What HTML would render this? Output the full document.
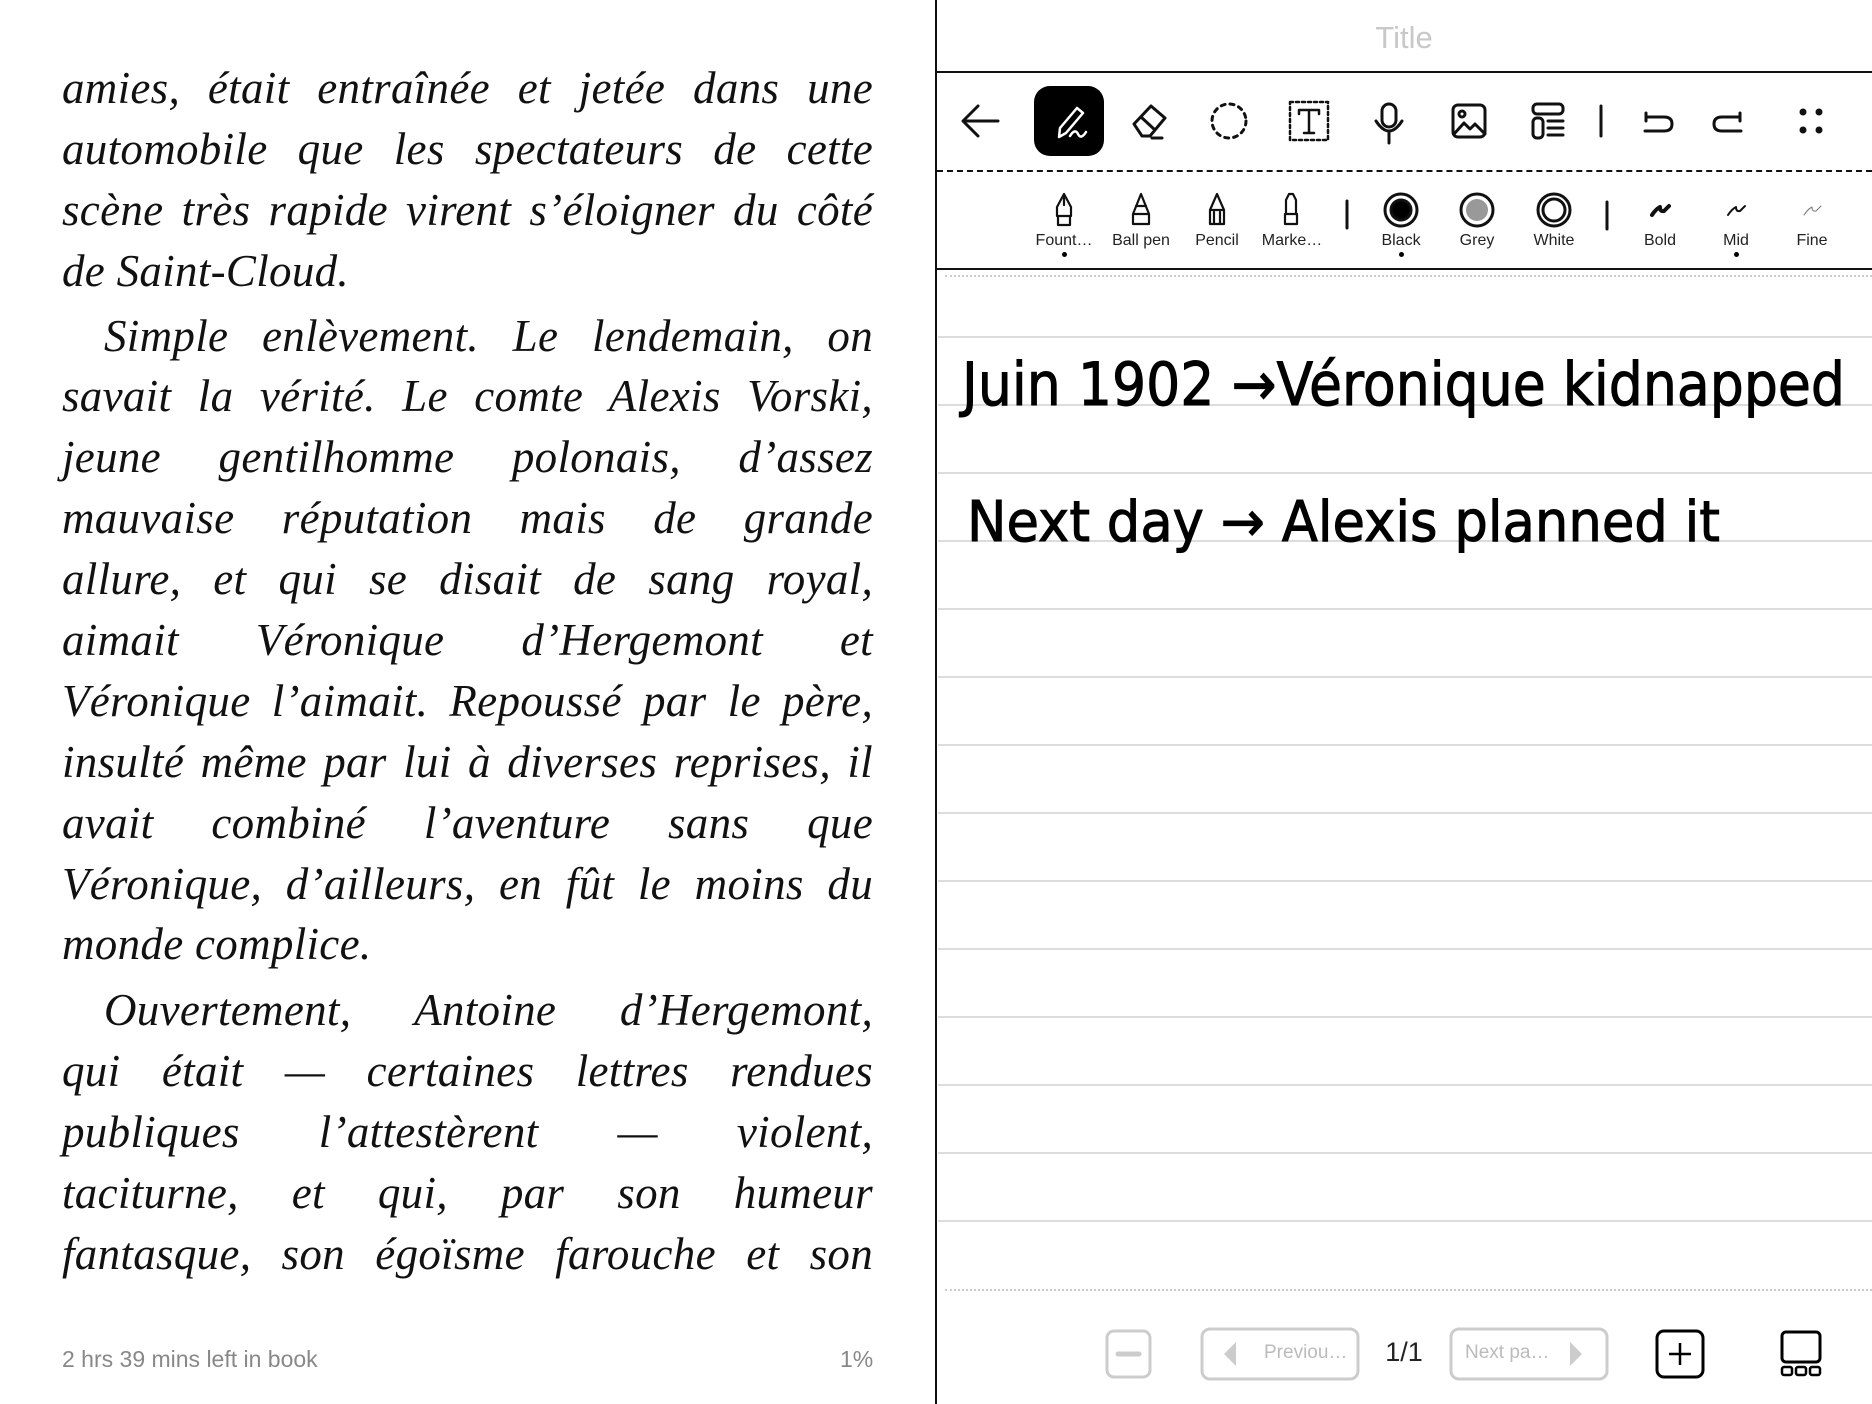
<!DOCTYPE html>
<html><head><meta charset="utf-8"><style>
*{margin:0;padding:0;box-sizing:border-box}
body{width:1872px;height:1404px;background:#fff;position:relative;overflow:hidden;font-family:"Liberation Sans",sans-serif}
.l{position:absolute;left:62px;width:811px;height:60px;line-height:60px;font-family:"Liberation Serif",serif;font-style:italic;font-size:45px;color:#111;white-space:nowrap;text-align:justify;text-align-last:justify;letter-spacing:0.3px}
.l.e{text-align-last:left}
.l.i{padding-left:42px}
.ab{position:absolute}
.rule{position:absolute;left:938px;width:934px;height:2px;background:#dcdcdc}
.lab{position:absolute;font-size:16px;color:#222;transform:translateX(-50%);white-space:nowrap;top:232px}
.dot{position:absolute;width:5px;height:5px;border-radius:50%;background:#000;top:252px}
</style></head><body>
<div class="l" style="top:58px">amies, était entraînée et jetée dans une</div>
<div class="l" style="top:119px">automobile que les spectateurs de cette</div>
<div class="l" style="top:180px">scène très rapide virent s’éloigner du côté</div>
<div class="l e" style="top:241px">de Saint-Cloud.</div>
<div class="l i" style="top:306px">Simple enlèvement. Le lendemain, on</div>
<div class="l" style="top:366px">savait la vérité. Le comte Alexis Vorski,</div>
<div class="l" style="top:427px">jeune gentilhomme polonais, d’assez</div>
<div class="l" style="top:488px">mauvaise réputation mais de grande</div>
<div class="l" style="top:549px">allure, et qui se disait de sang royal,</div>
<div class="l" style="top:610px">aimait Véronique d’Hergemont et</div>
<div class="l" style="top:671px">Véronique l’aimait. Repoussé par le père,</div>
<div class="l" style="top:732px">insulté même par lui à diverses reprises, il</div>
<div class="l" style="top:793px">avait combiné l’aventure sans que</div>
<div class="l" style="top:854px">Véronique, d’ailleurs, en fût le moins du</div>
<div class="l e" style="top:914px">monde complice.</div>
<div class="l i" style="top:980px">Ouvertement, Antoine d’Hergemont,</div>
<div class="l" style="top:1041px">qui était — certaines lettres rendues</div>
<div class="l" style="top:1102px">publiques l’attestèrent — violent,</div>
<div class="l" style="top:1163px">taciturne, et qui, par son humeur</div>
<div class="l" style="top:1224px">fantasque, son égoïsme farouche et son</div>
<div class="ab" style="left:62px;top:1346px;font-size:23px;color:#888">2 hrs 39 mins left in book</div>
<div class="ab" style="left:840px;top:1346px;font-size:23px;color:#888">1%</div>

<div class="ab" style="left:935px;top:0;width:2px;height:1404px;background:#111"></div>
<div class="ab" style="left:1404px;top:20px;transform:translateX(-50%);font-size:31px;color:#c8c8c8">Title</div>
<div class="ab" style="left:937px;top:71px;width:935px;height:2px;background:#111"></div>
<div class="ab" style="left:937px;top:170px;width:935px;height:0;border-top:2px dashed #111"></div>
<div class="ab" style="left:937px;top:268px;width:935px;height:2px;background:#111"></div>
<div class="ab" style="left:945px;top:275px;width:927px;height:0;border-top:2px dotted #ccc"></div>
<div class="ab" style="left:945px;top:1289px;width:927px;height:0;border-top:2px dotted #ccc"></div>
<div class="rule" style="top:336px"></div><div class="rule" style="top:404px"></div><div class="rule" style="top:472px"></div><div class="rule" style="top:540px"></div><div class="rule" style="top:608px"></div><div class="rule" style="top:676px"></div><div class="rule" style="top:744px"></div><div class="rule" style="top:812px"></div><div class="rule" style="top:880px"></div><div class="rule" style="top:948px"></div><div class="rule" style="top:1016px"></div><div class="rule" style="top:1084px"></div><div class="rule" style="top:1152px"></div><div class="rule" style="top:1220px"></div>

<svg class="ab" style="left:0;top:0" width="1872" height="280" fill="none" stroke="#111" stroke-width="3" stroke-linecap="round" stroke-linejoin="round">
<path d="M998 121H964M978 106L963 121L978 136"/>
<rect x="1034" y="86" width="70" height="70" rx="16" fill="#000" stroke="none"/>
<path d="M1059 137L1060 128L1077 108L1083 113L1066 133Z M1070 136q5-8 8 -2t8-2" stroke="#fff" stroke-width="2.5"/>
<path d="M1134 124L1151 106L1165 118L1150 136L1142 136Z M1141 117L1155 130 M1152 138H1162"/>
<circle cx="1229" cy="121" r="17" stroke-dasharray="4 5"/>
<rect x="1290" y="102" width="38" height="38" stroke-dasharray="3 3" stroke-width="2.5"/>
<path d="M1299 110H1319M1299 110v4M1319 110v4M1309 110V133M1304 133H1314" stroke-width="2.5"/>
<rect x="1382" y="104" width="14" height="23" rx="7"/><path d="M1376 121q13 20 26 0M1389 131V143"/>
<rect x="1453" y="105" width="32" height="32" rx="5"/><circle cx="1462" cy="114" r="3"/><path d="M1454 134l10-11 6 6 5-5 10 10"/>
<rect x="1533" y="104" width="30" height="10" rx="4"/><rect x="1533" y="118" width="10" height="20" rx="4"/><path d="M1548 121h15M1548 128h15M1548 135h15"/>
<path d="M1601 106V136"/>
<path d="M1646 117h18q8 0 8 7t-8 7h-19M1646 113v8"/>
<path d="M1740 117h-18q-8 0-8 7t8 7h19M1740 113v8"/>
<g fill="#111" stroke="none"><circle cx="1803" cy="112" r="3.5"/><circle cx="1819" cy="112" r="3.5"/><circle cx="1803" cy="130" r="3.5"/><circle cx="1819" cy="130" r="3.5"/></g>
<g stroke-width="2.2">
<path d="M1064 194l-7 13v9h14v-9z M1064 194v11 M1058 216h12v9h-12z"/>
<path d="M1141 194l-8 20v10h16v-10z M1136 206h10 M1133 214h16"/>
<path d="M1217 194l-7 16v14h14v-14z M1211 210h12 M1214 212v12M1220 212v12"/>
<path d="M1289 194h4l3 6v14h-10v-14z M1285 214h12v10h-12z"/>
</g>
<path d="M1347 201V228"/>
<circle cx="1401" cy="210" r="16"/><circle cx="1401" cy="210" r="10" fill="#000"/>
<circle cx="1477" cy="210" r="16"/><circle cx="1477" cy="210" r="11" fill="#999" stroke="none"/>
<circle cx="1554" cy="210" r="16"/><circle cx="1554" cy="210" r="11"/>
<path d="M1607 202V229"/>
<path d="M1652 215q4-6 8-8q0 5 4 4l5-5" stroke-width="4"/>
<path d="M1728 215q4-6 8-8q0 5 4 4l5-5" stroke-width="2"/>
<path d="M1804 215q4-6 8-8q0 5 4 4l5-5" stroke-width="1" stroke="#777"/>
</svg>
<div class="lab" style="left:1064px">Fount…</div><div class="lab" style="left:1141px">Ball pen</div><div class="lab" style="left:1217px">Pencil</div><div class="lab" style="left:1292px">Marke…</div>
<div class="lab" style="left:1401px">Black</div><div class="lab" style="left:1477px">Grey</div><div class="lab" style="left:1554px">White</div>
<div class="lab" style="left:1660px">Bold</div><div class="lab" style="left:1736px">Mid</div><div class="lab" style="left:1812px">Fine</div>
<div class="dot" style="left:1062px"></div><div class="dot" style="left:1399px"></div><div class="dot" style="left:1734px"></div>

<svg class="ab" style="left:0;top:330px" width="1872" height="260">
<text x="962" y="75" textLength="883" lengthAdjust="spacingAndGlyphs" font-family="DejaVu Sans" font-size="60" fill="#000" stroke="#000" stroke-width="1">Juin 1902 →Véronique kidnapped</text>
<text x="967" y="211" textLength="753" lengthAdjust="spacingAndGlyphs" font-family="DejaVu Sans" font-size="56" fill="#000" stroke="#000" stroke-width="1">Next day → Alexis planned it</text>
</svg>

<svg class="ab" style="left:0;top:1300px" width="1872" height="104" fill="none" stroke-linejoin="round">
<rect x="1107" y="31" width="43" height="46" rx="7" stroke="#ccc" stroke-width="3"/><path d="M1118 54h21" stroke="#ccc" stroke-width="5" stroke-linecap="round"/>
<rect x="1202" y="29" width="156" height="50" rx="8" stroke="#ccc" stroke-width="3"/><path d="M1236 42v24l-12-12z" fill="#ccc"/>
<rect x="1451" y="29" width="156" height="50" rx="8" stroke="#ccc" stroke-width="3"/><path d="M1570 42v24l12-12z" fill="#ccc"/>
<rect x="1657" y="31" width="46" height="46" rx="7" stroke="#000" stroke-width="3"/><path d="M1680 43v22M1669 54h22" stroke="#000" stroke-width="2.5"/>
<rect x="1782" y="32" width="38" height="30" rx="4" stroke="#000" stroke-width="3"/>
<rect x="1782" y="67" width="10" height="8" rx="2" stroke="#000" stroke-width="2.5"/><rect x="1796" y="67" width="10" height="8" rx="2" stroke="#000" stroke-width="2.5"/><rect x="1810" y="67" width="10" height="8" rx="2" stroke="#000" stroke-width="2.5"/>
</svg>
<div class="ab" style="left:1264px;top:1342px;font-size:19px;color:#bbb">Previou…</div>
<div class="ab" style="left:1465px;top:1342px;font-size:19px;color:#bbb">Next pa…</div>
<div class="ab" style="left:1404px;top:1337px;transform:translateX(-50%);font-size:27px;color:#222">1/1</div>
</body></html>
